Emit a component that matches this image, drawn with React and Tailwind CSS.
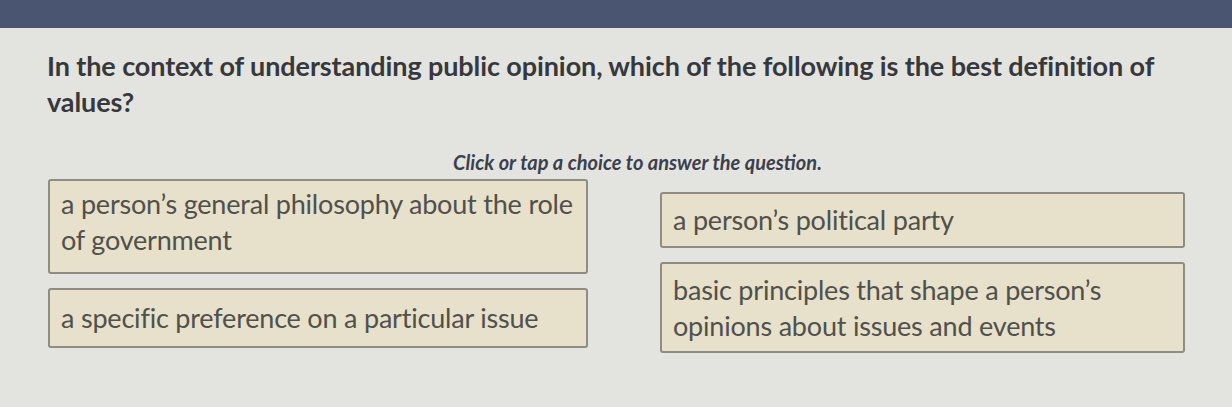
import React from "react";

const font = { fontFamily: "Lato, 'Open Sans', sans-serif" };

const Choice = ({ children, className }) => (
  <button
    className={
      "text-left bg-[#e7e0ca] border-2 border-[#8e8c83] rounded-[3px] px-[11px] text-[27px] leading-[36px] text-[#50504c] tracking-[-0.2px] " +
      className
    }
  >
    {children}
  </button>
);

const App = () => {
  return (
    <div className="w-[1232px] h-[407px] bg-[#e3e4e0] overflow-hidden" style={font}>
      <div className="h-[28px] bg-[#4a5572]" />
      <div className="pl-[47px] pr-[40px] pt-[20px]">
        <h2 className="text-[27px] leading-[36px] font-bold text-[#37383c] tracking-[-0.1px]">
          In the context of understanding public opinion, which of the following is the best definition of values?
        </h2>
        <p className="mt-[30px] text-center text-[20px] leading-[24px] font-bold italic text-[#3d3f4d] pl-[36px]">
          Click or tap a choice to answer the question.
        </p>
        <div className="mt-[5px] grid grid-cols-[540px_525px] gap-x-[72px] pl-[1px]">
          <div className="flex flex-col gap-[14px]">
            <Choice className="h-[95px] pt-[5px] flex flex-col justify-start">
              <span>a person’s general philosophy about the role</span>
              <span>of government</span>
            </Choice>
            <Choice className="h-[60px]">a specific preference on a particular issue</Choice>
          </div>
          <div className="flex flex-col gap-[14px] pt-[13px]">
            <Choice className="h-[56px]">a person’s political party</Choice>
            <Choice className="h-[91px] flex flex-col justify-center">
              <span>basic principles that shape a person’s</span>
              <span>opinions about issues and events</span>
            </Choice>
          </div>
        </div>
      </div>
    </div>
  );
};

export default App;
